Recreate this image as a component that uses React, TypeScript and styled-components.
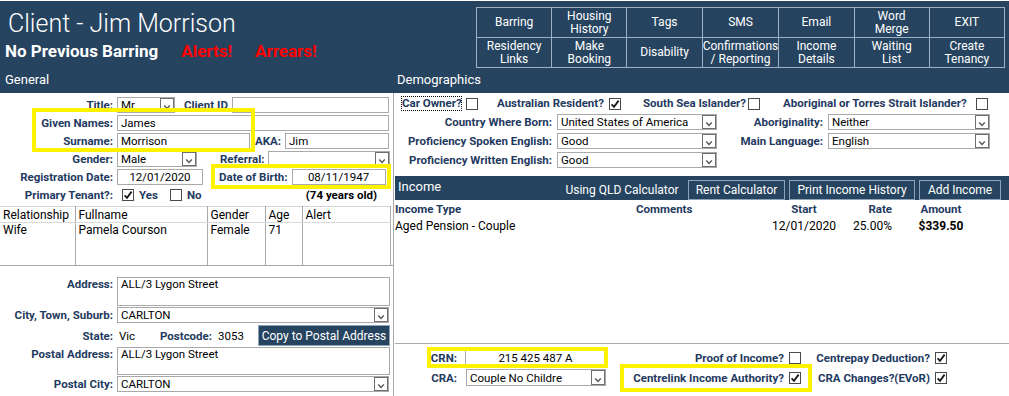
import React from 'react';
import styled, { createGlobalStyle } from 'styled-components';

const NAVY = '#264460';
const LABEL = '#1f3a5f';
const LINE = '#a9a9a9';
const HIGHLIGHT = '#fff200';

const GlobalStyle = createGlobalStyle`
  html, body {
    margin: 0;
    padding: 0;
    background: #fff;
  }
  body {
    font-family: Roboto, 'Liberation Sans', Arial, sans-serif;
    font-size: 12px;
    color: #000;
  }
  * {
    box-sizing: border-box;
  }
`;

const Page = styled.div`
  position: relative;
  width: 1009px;
  height: 396px;
  overflow: hidden;
  display: flex;
  flex-direction: column;
`;

/* ---------- header ---------- */

const Header = styled.header`
  margin-top: 1px;
  height: 92px;
  background: ${NAVY};
  color: #fff;
  display: flex;
  flex-direction: column;
  flex-shrink: 0;
`;

const HeaderTop = styled.div`
  display: flex;
  height: 69px;
`;

const TitleBlock = styled.div`
  flex: 1;
  padding: 7px 0 0 5px;
`;

const Title = styled.h1`
  margin: 0 0 0 3px;
  font-weight: 300;
  font-size: 25px;
  line-height: 32px;
`;

const StatusLine = styled.div`
  display: flex;
  gap: 23px;
  margin-top: 1px;
`;

const Status = styled.span<{ $alert?: boolean }>`
  font-weight: 700;
  font-size: 17px;
  line-height: 20px;
  color: ${(p) => (p.$alert ? '#ff0000' : '#fff')};
`;

const ActionGrid = styled.nav`
  margin: 6px 4px 0 0;
  width: 529px;
  height: 61px;
  display: grid;
  grid-template-columns: repeat(7, 1fr);
  grid-template-rows: repeat(2, 1fr);
  gap: 1px;
  padding: 1px;
  background: #9db0c4;
`;

const ActionButton = styled.button`
  background: ${NAVY};
  color: #fff;
  border: 0;
  padding: 0;
  font-family: inherit;
  font-size: 12px;
  line-height: 13px;
  white-space: pre-line;
  display: flex;
  align-items: center;
  justify-content: center;
  text-align: center;
`;

const SectionTitles = styled.div`
  display: flex;
  height: 23px;
  padding-top: 2px;
  font-size: 13px;
  line-height: 16px;
`;

const SectionTitle = styled.div<{ $w?: number }>`
  width: ${(p) => (p.$w ? `${p.$w}px` : 'auto')};
  padding-left: ${(p) => (p.$w ? 5 : 3)}px;
`;

/* ---------- common controls ---------- */

const Body = styled.div`
  display: flex;
  flex: 1;
  min-height: 0;
`;

const Row = styled.div<{ $h?: number; $mt?: number; $top?: boolean }>`
  display: flex;
  align-items: ${(p) => (p.$top ? 'flex-start' : 'center')};
  height: ${(p) => p.$h ?? 18}px;
  margin-top: ${(p) => p.$mt ?? 0}px;
`;

const FieldLabel = styled.label<{ $w?: number; $ml?: number }>`
  flex-shrink: 0;
  width: ${(p) => (p.$w ? `${p.$w}px` : 'auto')};
  margin-left: ${(p) => p.$ml ?? 0}px;
  padding-right: 4px;
  text-align: right;
  font-weight: 700;
  font-size: 11.5px;
  line-height: 14px;
  color: ${LABEL};
  white-space: nowrap;
`;

const TextBox = styled.div<{ $w?: number; $h?: number; $center?: boolean }>`
  flex-shrink: 0;
  width: ${(p) => (p.$w ? `${p.$w}px` : '100%')};
  height: ${(p) => p.$h ?? 16}px;
  border: 1px solid ${LINE};
  background: #fff;
  font-size: 11.5px;
  line-height: 14px;
  padding: 0 3px;
  display: flex;
  align-items: center;
  justify-content: ${(p) => (p.$center ? 'center' : 'flex-start')};
  white-space: nowrap;
  overflow: hidden;
`;

const TextArea = styled(TextBox)`
  align-items: flex-start;
  line-height: 12px;
  padding-top: 0;
`;

const SelectFrame = styled(TextBox)`
  padding-right: 0;
`;

const SelectValue = styled.span`
  flex: 1;
  overflow: hidden;
`;

const DropButton = styled.span`
  align-self: stretch;
  width: 14px;
  border: 1px solid #6f6f6f;
  background: #fff;
  display: flex;
  align-items: flex-end;
  justify-content: center;
`;

const PlainValue = styled.span<{ $w: number }>`
  width: ${(p) => p.$w}px;
  padding-left: 2px;
  flex-shrink: 0;
  font-size: 11.5px;
`;

const CheckBoxFrame = styled.span<{ $ml?: number }>`
  width: 12px;
  height: 12px;
  margin-left: ${(p) => p.$ml ?? 0}px;
  border: 1px solid #4a4a4a;
  background: #fff;
  display: inline-flex;
  align-items: center;
  justify-content: center;
  flex-shrink: 0;
`;

const Select = ({ value, w, h }: { value: string; w?: number; h?: number }) => (
  <SelectFrame $w={w} $h={h}>
    <SelectValue>{value}</SelectValue>
    <DropButton>
      <svg width="10" height="8" viewBox="0 0 10 8">
        <path d="M2.2 2.6 L5 5.4 L7.8 2.6" fill="none" stroke="#555" strokeWidth="1.4" />
      </svg>
    </DropButton>
  </SelectFrame>
);

const Check = ({ checked, ml }: { checked?: boolean; ml?: number }) => (
  <CheckBoxFrame $ml={ml}>
    {checked && (
      <svg width="10" height="10" viewBox="0 0 10 10">
        <path d="M1.6 5.3 L4 7.8 L8.6 1.6" fill="none" stroke="#1a1a1a" strokeWidth="1.8" />
      </svg>
    )}
  </CheckBoxFrame>
);

/* ---------- left panel ---------- */

const LeftPanel = styled.section`
  width: 394px;
  flex-shrink: 0;
  border-right: 1px solid ${LINE};
  display: flex;
  flex-direction: column;
`;

const GeneralForm = styled.div`
  padding-top: 3px;
`;

const AgeNote = styled.span`
  margin-left: auto;
  margin-right: 16px;
  font-weight: 700;
  font-size: 11.5px;
`;

const FamilyTable = styled.table`
  width: 391px;
  margin-top: 2px;
  border-collapse: collapse;
  table-layout: fixed;
  border-top: 1px solid #d4d4d4;
  font-size: 12px;
`;

const FamilyCell = styled.td<{ $head?: boolean }>`
  border-right: 1px solid ${LINE};
  border-bottom: ${(p) => (p.$head ? '1px solid #d9d9d9' : '0')};
  padding: 0 3px;
  height: ${(p) => (p.$head ? 16 : 14)}px;
  line-height: 14px;
  font-weight: 400;
  text-align: left;
  white-space: nowrap;
  overflow: hidden;
  vertical-align: middle;
`;

const FillerCell = styled(FamilyCell)`
  height: 28px;
`;

const AddressBlock = styled.div`
  border-top: 1px solid ${LINE};
  padding-top: 11px;
`;

const CopyButton = styled.button`
  width: 132px;
  height: 21px;
  margin-left: auto;
  margin-right: 3px;
  border: 1px solid #8ea2b8;
  background: ${NAVY};
  color: #fff;
  font-family: inherit;
  font-size: 12px;
  padding: 0;
  white-space: nowrap;
`;

/* ---------- right panel ---------- */

const RightPanel = styled.section`
  flex: 1;
  min-width: 0;
  padding-left: 1px;
  display: flex;
  flex-direction: column;
`;

const CheckRow = styled.div`
  display: flex;
  align-items: center;
  height: 15px;
  margin-top: 3px;
`;

const CheckLabel = styled.span<{ $w: number; $ml: number; $focus?: boolean }>`
  width: ${(p) => p.$w}px;
  margin-left: ${(p) => p.$ml}px;
  text-align: right;
  font-weight: 700;
  font-size: 11.5px;
  line-height: 13px;
  color: ${LABEL};
  white-space: nowrap;
  border: 1px ${(p) => (p.$focus ? 'dotted #000' : 'solid transparent')};
`;

const SelectGrid = styled.div`
  display: grid;
  grid-template-columns: 162px 160px 111px 162px;
  grid-auto-rows: 16px;
  row-gap: 3px;
  margin-top: 3px;
  align-items: center;
`;

const GridLabel = styled.span`
  text-align: right;
  padding-right: 5px;
  font-weight: 700;
  font-size: 11.5px;
  color: ${LABEL};
  white-space: nowrap;
`;

const IncomeBar = styled.div`
  margin-top: 8px;
  height: 24px;
  background: ${NAVY};
  color: #fff;
  display: flex;
  align-items: center;
  gap: 4px;
  padding: 0 8px 0 3px;
  flex-shrink: 0;
`;

const IncomeTitle = styled.span`
  margin-right: auto;
  align-self: flex-start;
  margin-top: 3px;
  font-size: 13px;
`;

const IncomeButton = styled.button<{ $w: number; $plain?: boolean }>`
  width: ${(p) => p.$w}px;
  height: 20px;
  margin-top: 3px;
  border: 1px solid ${(p) => (p.$plain ? NAVY : '#8ea2b8')};
  background: ${NAVY};
  color: #fff;
  font-family: inherit;
  font-size: 12px;
  padding: 0;
  white-space: nowrap;
`;

const IncomeTable = styled.div`
  flex: 1;
  display: grid;
  grid-template-columns: 241px 128px 80px 52px 90px;
  grid-auto-rows: 17px;
  align-content: start;
  align-items: center;
`;

const IncomeCell = styled.span<{ $align?: 'left' | 'center' | 'right'; $bold?: boolean; $head?: boolean }>`
  text-align: ${(p) => p.$align ?? 'left'};
  padding-right: ${(p) => (p.$align === 'right' ? 4 : 0)}px;
  font-weight: ${(p) => (p.$bold || p.$head ? 700 : 400)};
  font-size: ${(p) => (p.$head ? 11.5 : 12)}px;
  color: ${(p) => (p.$head ? LABEL : '#000')};
  white-space: nowrap;
`;

const BottomSection = styled.div`
  height: 53px;
  flex-shrink: 0;
  border-top: 1px solid ${LINE};
  padding-top: 5px;
  display: grid;
  grid-template-columns: 67px 144px 183px 12px 134px 12px;
  grid-template-rows: 17px 17px;
  row-gap: 3px;
  align-items: center;
`;

const CrnBox = styled(TextBox)`
  margin-left: 3px;
`;

const CraSelect = styled.div`
  margin-left: 4px;
`;

/* ---------- annotation overlays ---------- */

const Highlight = styled.div<{ $x: number; $y: number; $w: number; $h: number }>`
  position: absolute;
  left: ${(p) => p.$x}px;
  top: ${(p) => p.$y}px;
  width: ${(p) => p.$w}px;
  height: ${(p) => p.$h}px;
  border: 4px solid ${HIGHLIGHT};
  pointer-events: none;
`;

const actions = [
  'Barring',
  'Housing\nHistory',
  'Tags',
  'SMS',
  'Email',
  'Word\nMerge',
  'EXIT',
  'Residency\nLinks',
  'Make\nBooking',
  'Disability',
  'Confirmations\n/ Reporting',
  'Income\nDetails',
  'Waiting\nList',
  'Create\nTenancy',
];

const App = () => {
  return (
    <Page>
      <GlobalStyle />
      <Header>
        <HeaderTop>
          <TitleBlock>
            <Title>Client - Jim Morrison</Title>
            <StatusLine>
              <Status>No Previous Barring</Status>
              <Status $alert>Alerts!</Status>
              <Status $alert>Arrears!</Status>
            </StatusLine>
          </TitleBlock>
          <ActionGrid>
            {actions.map((a) => (
              <ActionButton key={a}>{a}</ActionButton>
            ))}
          </ActionGrid>
        </HeaderTop>
        <SectionTitles>
          <SectionTitle $w={394}>General</SectionTitle>
          <SectionTitle>Demographics</SectionTitle>
        </SectionTitles>
      </Header>

      <Body>
        <LeftPanel>
          <GeneralForm>
            <Row>
              <FieldLabel $w={117}>Title:</FieldLabel>
              <Select value="Mr" w={58} />
              <FieldLabel $ml={9}>Client ID</FieldLabel>
              <TextBox $w={157} />
            </Row>
            <Row>
              <FieldLabel $w={117}>Given Names:</FieldLabel>
              <TextBox $w={272}>James</TextBox>
            </Row>
            <Row>
              <FieldLabel $w={117}>Surname:</FieldLabel>
              <TextBox $w={133}>Morrison</TextBox>
              <FieldLabel $ml={5}>AKA:</FieldLabel>
              <TextBox $w={104}>Jim</TextBox>
            </Row>
            <Row>
              <FieldLabel $w={117}>Gender:</FieldLabel>
              <Select value="Male" w={80} />
              <FieldLabel $ml={23}>Referral:</FieldLabel>
              <Select value="" w={122} />
            </Row>
            <Row>
              <FieldLabel $w={117}>Registration Date:</FieldLabel>
              <TextBox $w={86} $center>
                12/01/2020
              </TextBox>
              <FieldLabel $ml={16}>Date of Birth:</FieldLabel>
              <TextBox $w={94} $center>
                08/11/1947
              </TextBox>
            </Row>
            <Row>
              <FieldLabel $w={117}>Primary Tenant?:</FieldLabel>
              <Check checked ml={5} />
              <FieldLabel $ml={5}>Yes</FieldLabel>
              <Check ml={8} />
              <FieldLabel $ml={5}>No</FieldLabel>
              <AgeNote>(74 years old)</AgeNote>
            </Row>
          </GeneralForm>

          <FamilyTable>
            <colgroup>
              <col style={{ width: 75 }} />
              <col style={{ width: 132 }} />
              <col style={{ width: 58 }} />
              <col style={{ width: 37 }} />
              <col />
            </colgroup>
            <thead>
              <tr>
                <FamilyCell as="th" $head>Relationship</FamilyCell>
                <FamilyCell as="th" $head>Fullname</FamilyCell>
                <FamilyCell as="th" $head>Gender</FamilyCell>
                <FamilyCell as="th" $head>Age</FamilyCell>
                <FamilyCell as="th" $head>Alert</FamilyCell>
              </tr>
            </thead>
            <tbody>
              <tr>
                <FamilyCell>Wife</FamilyCell>
                <FamilyCell>Pamela Courson</FamilyCell>
                <FamilyCell>Female</FamilyCell>
                <FamilyCell>71</FamilyCell>
                <FamilyCell />
              </tr>
              <tr>
                <FillerCell />
                <FillerCell />
                <FillerCell />
                <FillerCell />
                <FillerCell />
              </tr>
            </tbody>
          </FamilyTable>

          <AddressBlock>
            <Row $h={29} $top>
              <FieldLabel $w={117}>Address:</FieldLabel>
              <TextArea $w={273} $h={29}>ALL/3 Lygon Street</TextArea>
            </Row>
            <Row $h={16} $mt={1}>
              <FieldLabel $w={117}>City, Town, Suburb:</FieldLabel>
              <Select value="CARLTON" w={272} />
            </Row>
            <Row $h={21} $mt={2}>
              <FieldLabel $w={117}>State:</FieldLabel>
              <PlainValue $w={43}>Vic</PlainValue>
              <FieldLabel>Postcode:</FieldLabel>
              <PlainValue $w={36}>3053</PlainValue>
              <CopyButton>Copy to Postal Address</CopyButton>
            </Row>
            <Row $h={28} $mt={1} $top>
              <FieldLabel $w={117}>Postal Address:</FieldLabel>
              <TextArea $w={273} $h={28}>ALL/3 Lygon Street</TextArea>
            </Row>
            <Row $h={16} $mt={1}>
              <FieldLabel $w={117}>Postal City:</FieldLabel>
              <Select value="CARLTON" w={272} />
            </Row>
          </AddressBlock>
        </LeftPanel>

        <RightPanel>
          <CheckRow>
            <CheckLabel $w={61} $ml={6} $focus>
              Car Owner?
            </CheckLabel>
            <Check ml={4} />
            <CheckLabel $w={103} $ml={18}>
              Australian Resident?
            </CheckLabel>
            <Check checked ml={10} />
            <CheckLabel $w={103} $ml={21}>
              South Sea Islander?
            </CheckLabel>
            <Check ml={3} />
            <CheckLabel $w={183} $ml={22}>
              Aboriginal or Torres Strait Islander?
            </CheckLabel>
            <Check ml={11} />
          </CheckRow>

          <SelectGrid>
            <GridLabel>Country Where Born:</GridLabel>
            <Select value="United States of America" />
            <GridLabel>Aboriginality:</GridLabel>
            <Select value="Neither" />
            <GridLabel>Proficiency Spoken English:</GridLabel>
            <Select value="Good" />
            <GridLabel>Main Language:</GridLabel>
            <Select value="English" />
            <GridLabel>Proficiency Written English:</GridLabel>
            <Select value="Good" />
          </SelectGrid>

          <IncomeBar>
            <IncomeTitle>Income</IncomeTitle>
            <IncomeButton $w={124} $plain>
              Using QLD Calculator
            </IncomeButton>
            <IncomeButton $w={97}>Rent Calculator</IncomeButton>
            <IncomeButton $w={126}>Print Income History</IncomeButton>
            <IncomeButton $w={82}>Add Income</IncomeButton>
          </IncomeBar>

          <IncomeTable>
            <IncomeCell $head>Income Type</IncomeCell>
            <IncomeCell $head>Comments</IncomeCell>
            <IncomeCell $head $align="center">
              Start
            </IncomeCell>
            <IncomeCell $head $align="right">
              Rate
            </IncomeCell>
            <IncomeCell $head $align="center">
              Amount
            </IncomeCell>
            <IncomeCell>Aged Pension - Couple</IncomeCell>
            <IncomeCell />
            <IncomeCell $align="center">12/01/2020</IncomeCell>
            <IncomeCell $align="right">25.00%</IncomeCell>
            <IncomeCell $align="center" $bold>
              $339.50
            </IncomeCell>
          </IncomeTable>

          <BottomSection>
            <GridLabel>CRN:</GridLabel>
            <CrnBox $w={141} $center>
              215 425 487 A
            </CrnBox>
            <GridLabel>Proof of Income?</GridLabel>
            <Check />
            <GridLabel>Centrepay Deduction?</GridLabel>
            <Check checked />
            <GridLabel>CRA:</GridLabel>
            <CraSelect>
              <Select value="Couple No Childre" w={140} h={17} />
            </CraSelect>
            <GridLabel>Centrelink Income Authority?</GridLabel>
            <Check checked />
            <GridLabel>CRA Changes?(EVoR)</GridLabel>
            <Check checked />
          </BottomSection>
        </RightPanel>
      </Body>

      <Highlight $x={32} $y={108} $w={223} $h={44} />
      <Highlight $x={211} $y={164} $w={180} $h={25} />
      <Highlight $x={427} $y={347} $w={181} $h={21} />
      <Highlight $x={620} $y={364} $w={192} $h={28} />
    </Page>
  );
};

export default App;
